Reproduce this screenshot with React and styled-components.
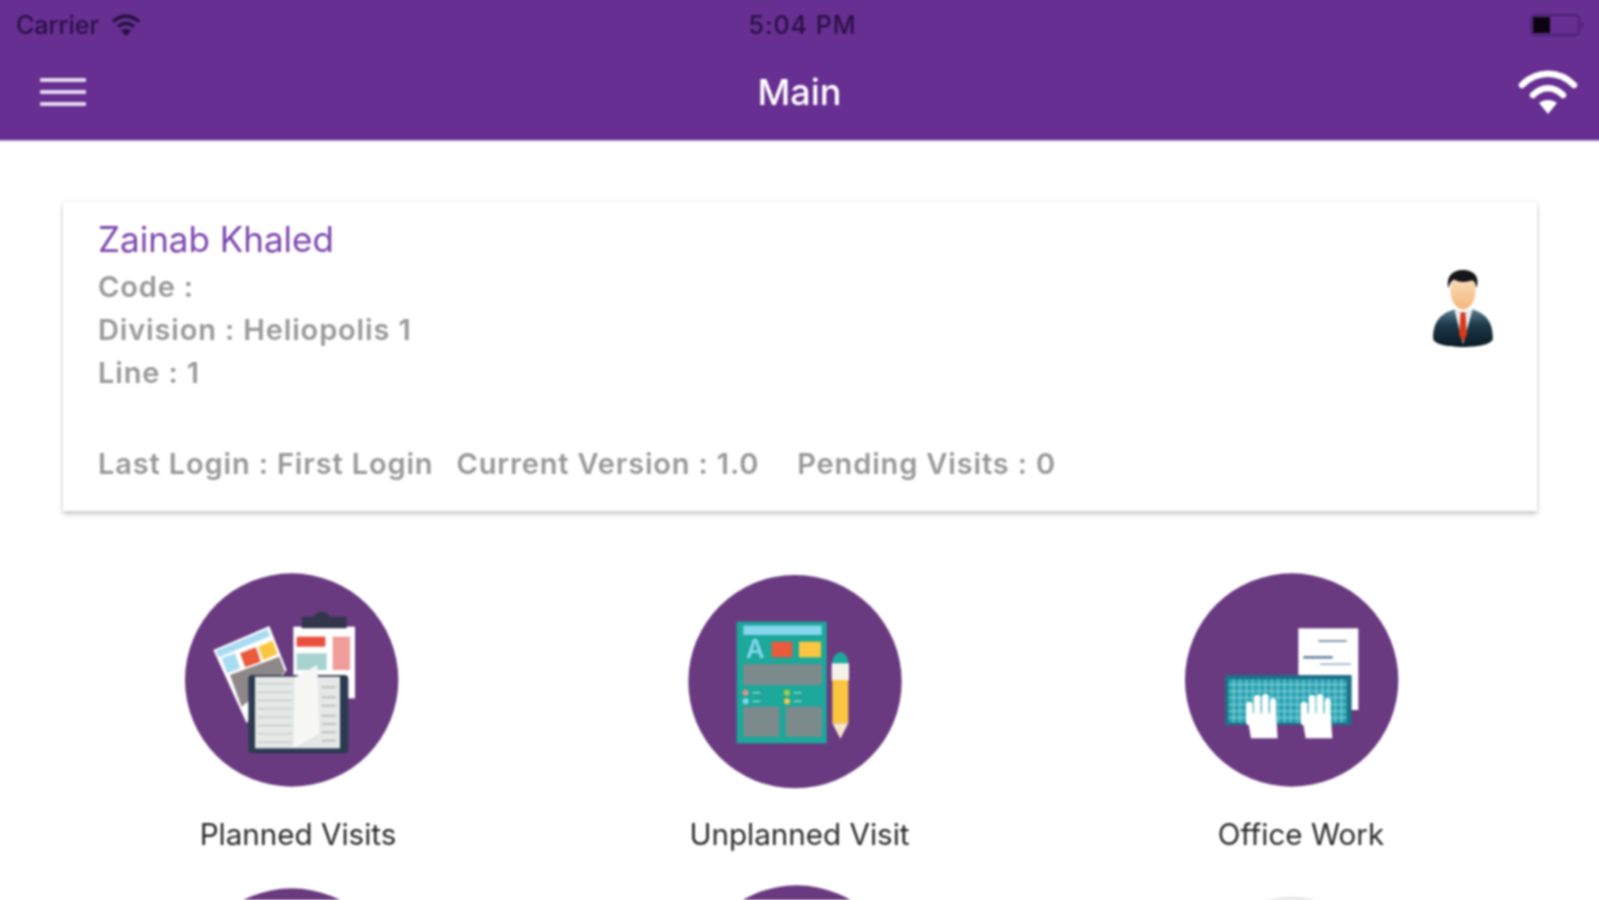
import React from "react";
import styled, { createGlobalStyle } from "styled-components";

const GlobalStyle = createGlobalStyle`
  html, body {
    margin: 0;
    padding: 0;
    overflow: hidden;
    background: #fff;
    font-family: Inter, "Noto Sans", "Liberation Sans", sans-serif;
  }
`;

// the extra 4px around the screen keeps the blur from fading at the window edge
const Screen = styled.div`
  height: 904px;
  box-sizing: border-box;
  margin: -4px -4px 0;
  padding: 4px 4px 0;
  overflow: hidden;
  background: #fff;
  filter: blur(0.9px);
`;

const Header = styled.header`
  background: #662f91;
  height: 144px;
  margin: -4px -4px 0;
  padding: 4px 4px 0;
  border-bottom: 1px solid #5d2589;
  box-sizing: border-box;
  box-shadow: 0 1px 2px rgba(102, 47, 145, 0.4);
`;

const StatusBar = styled.div`
  height: 50px;
  display: grid;
  grid-template-columns: 1fr auto 1fr;
  align-items: center;
  padding: 0 14px 0 16px;
  color: #2a1045;
  font-size: 25px;
  font-weight: 500;
`;

const StatusLeft = styled.div`
  display: flex;
  align-items: center;
  gap: 12px;
`;

const Clock = styled.span`
  letter-spacing: 1px;
  margin-left: 4px;
`;

const StatusRight = styled.div`
  display: flex;
  justify-content: flex-end;
`;

const NavBar = styled.div`
  height: 84px;
  display: grid;
  grid-template-columns: 1fr auto 1fr;
  align-items: center;
  padding: 0 21px;
`;

const MenuButton = styled.div`
  display: flex;
  flex-direction: column;
  gap: 8px;
  width: 46px;
  margin-left: 19px;
`;

const MenuLine = styled.span`
  display: block;
  height: 4px;
  border-radius: 1px;
  background: #e6d5ef;
`;

const Title = styled.div`
  color: #fff;
  font-size: 36px;
  font-weight: 500;
`;

const NavRight = styled.div`
  display: flex;
  justify-content: flex-end;
`;

const Card = styled.section`
  margin: 62px 62px 0 63px;
  height: 309px;
  box-sizing: border-box;
  padding: 12px 42px 0 35px;
  background: #fff;
  box-shadow: 0 3px 5px rgba(0, 0, 0, 0.22), 0 0 3px rgba(0, 0, 0, 0.07);
  display: flex;
  justify-content: space-between;
`;

const Name = styled.div`
  color: #7b45ad;
  font-size: 35px;
  line-height: 51px;
`;

const Detail = styled.div`
  color: #999;
  font-size: 29px;
  font-weight: 600;
  line-height: 43px;
  letter-spacing: 0.85px;
`;

const Footer = styled.div`
  display: flex;
  margin-top: 48px;
`;

const FooterItem = styled(Detail)`
  margin-right: ${(p) => p.$gap}px;
`;

const Avatar = styled.svg`
  width: 64px;
  height: 79px;
  margin-top: 55px;
`;

const TileGrid = styled.div`
  display: grid;
  grid-template-columns: repeat(3, 501.5px);
  justify-content: center;
  row-gap: 21px;
  margin-top: 49px;
`;

const Tile = styled.div`
  display: flex;
  flex-direction: column;
  align-items: center;
`;

const TileArt = styled.svg`
  width: 240px;
  height: 240px;
  transform: translateX(${(p) => p.$shift}px);
`;

const TileLabel = styled.div`
  margin-top: 14px;
  color: #2a2a2a;
  font-size: 29.6px;
  line-height: 40px;
`;

const StatusWifi = () => (
  <svg width="30" height="24" viewBox="0 0 30 24" fill="none" stroke="#26103c" strokeWidth="3.4">
    <path d="M2 8.5C10 1.5 20 1.5 28 8.5" />
    <path d="M7 13.5C12 9.5 18 9.5 23 13.5" />
    <path d="M15 23L10 17.5C13 15.5 17 15.5 20 17.5Z" fill="#26103c" stroke="none" />
  </svg>
);

const Battery = () => (
  <svg width="56" height="24" viewBox="0 0 56 24">
    <rect x="2" y="2" width="48" height="20" rx="4" fill="none" stroke="#4d2172" strokeWidth="2" />
    <path d="M52 8.500L55 12L52 15.500Z" fill="#4d2172" />
    <rect x="4" y="4" width="17" height="16" fill="#0b0410" />
  </svg>
);

const NavWifi = () => (
  <svg width="60" height="50" viewBox="0 0 60 50" fill="none" stroke="#fff" strokeLinecap="round" strokeWidth="6.5">
    <path d="M4 18C19 3 41 3 56 18" />
    <path d="M15 28C24 19 36 19 45 28" />
    <path d="M30 47L21 36C26 32 34 32 39 36Z" fill="#fff" stroke="none" />
  </svg>
);

const PersonIcon = () => (
  <Avatar viewBox="0 0 66 82">
    <defs>
      <linearGradient id="suit" x1="0" y1="0" x2="0" y2="1">
        <stop offset="0" stopColor="#5d7f90" />
        <stop offset="0.4" stopColor="#1d3a4a" />
        <stop offset="1" stopColor="#0a1a24" />
      </linearGradient>
      <linearGradient id="skin" x1="0" y1="0" x2="0" y2="1">
        <stop offset="0" stopColor="#fde6c8" />
        <stop offset="1" stopColor="#f3b67c" />
      </linearGradient>
    </defs>
    <path d="M2 72C2 54 10 46 24 42L33 46L43 42C56 46 64 54 64 72C64 78 50 81 33 81C16 81 2 78 2 72Z" fill="url(#suit)" />
    <path d="M24 42L33 78L43 42L33 46Z" fill="#e9eef0" />
    <path d="M30.500 45H35.500L37 68L33 76L29 68Z" fill="#d9381a" />
    <ellipse cx="33" cy="22" rx="13" ry="20" fill="url(#skin)" />
    <path d="M18 20C15 8 22 1 33 1C44 1 51 8 47 20C46 14 44 11 42 12C36 14 28 14 24 11C21 12 19 15 18 20Z" fill="#15151a" />
  </Avatar>
);

const Sheet = ({ children, size }) => (
  <g>
    <circle cx={size.cx} cy={size.cy} r="320" fill="#6a3a80" />
    {children}
  </g>
);

const PlannedArt = () => (
  <Sheet size={{ cx: 365, cy: 360 }}>
    <path d="M130 270L298 198L350 330L230 490Z" fill="#fff" />
    <path d="M138 272L292 208L300 228L146 292Z" fill="#a8dcf2" />
    <path d="M155 295L195 280L210 325L172 340Z" fill="#a8dcf2" />
    <path d="M210 280L258 262L272 305L226 322Z" fill="#ea5a3c" />
    <path d="M265 260L308 242L322 282L280 300Z" fill="#fbc63f" />
    <path d="M180 345L328 290L345 335L240 420L215 440Z" fill="#8d8788" />
    <rect x="370" y="200" width="185" height="215" fill="#fff" />
    <path d="M395 170H430C440 150 470 150 480 170H530V205H395Z" fill="#33364a" />
    <rect x="380" y="230" width="86" height="30" fill="#e84f3d" />
    <rect x="380" y="280" width="90" height="50" fill="#a7d3cf" />
    <rect x="488" y="230" width="52" height="100" fill="#ef9d98" />
    <rect x="235" y="345" width="300" height="235" rx="12" fill="#2c3a50" />
    <rect x="255" y="350" width="255" height="215" fill="#e4e8e6" />
    {[370, 395, 420, 445, 470, 495, 520, 545].map((y) => (
      <rect key={y} x="262" y={y} width="105" height="3" fill="#bcc4c2" />
    ))}
    {[380, 410, 435, 465, 490, 515, 540].map((y) => (
      <rect key={y} x="455" y={y} width="42" height="4" fill="#a9b1af" />
    ))}
    <path d="M375 352L442 315L448 520L370 565Z" fill="#f7f7f6" />
  </Sheet>
);

const UnplannedArt = () => (
  <Sheet size={{ cx: 360, cy: 365 }}>
    <rect x="185" y="185" width="270" height="365" fill="#1ca89a" />
    <rect x="205" y="197" width="235" height="28" fill="#86d7ee" />
    <text x="213" y="295" fontFamily="Inter, sans-serif" fontSize="76" fontWeight="600" fill="#86d7ee">A</text>
    <rect x="290" y="245" width="62" height="47" fill="#ea5a3c" />
    <rect x="372" y="245" width="66" height="47" fill="#fbc63f" />
    <rect x="205" y="312" width="235" height="63" fill="#7d8a8c" />
    <circle cx="212" cy="398" r="9" fill="#e8928a" />
    <circle cx="212" cy="424" r="9" fill="#86d7ee" />
    <circle cx="336" cy="398" r="9" fill="#a9cf3f" />
    <circle cx="336" cy="424" r="9" fill="#fbc63f" />
    {[398, 424].map((y) => (
      <g key={y}>
        <rect x="232" y={y - 2} width="24" height="4" fill="#a5dcd6" />
        <rect x="356" y={y - 2} width="24" height="4" fill="#a5dcd6" />
      </g>
    ))}
    <rect x="205" y="440" width="108" height="90" fill="#7d8a8c" />
    <rect x="332" y="440" width="108" height="90" fill="#7d8a8c" />
    <path d="M472 312C472 265 520 265 520 312Z" fill="#1ca89a" />
    <rect x="470" y="310" width="52" height="52" fill="#f4f1ea" />
    <rect x="472" y="360" width="48" height="130" fill="#fbc63f" />
    <path d="M472 490H520L496 536Z" fill="#f4e6c8" />
  </Sheet>
);

const Hand = ({ x }) => (
  <g fill="#fff">
    <rect x={x} y="425" width="20" height="70" rx="10" />
    <rect x={x + 24} y="405" width="20" height="80" rx="10" />
    <rect x={x + 48} y="402" width="20" height="80" rx="10" />
    <rect x={x + 72} y="415" width="18" height="70" rx="9" />
    <path d={`M${x + 2} 460H${x + 90}L${x + 95} 535H${x + 15}Z`} />
  </g>
);

const OfficeArt = () => (
  <Sheet size={{ cx: 365, cy: 360 }}>
    <rect x="385" y="205" width="180" height="245" fill="#fff" />
    <rect x="445" y="240" width="85" height="6" fill="#7f97ad" />
    <rect x="400" y="288" width="88" height="8" fill="#6c88a3" />
    <rect x="450" y="310" width="92" height="5" fill="#9fb2c4" />
    <rect x="165" y="345" width="380" height="150" fill="#1e6f86" />
    <rect x="175" y="358" width="355" height="130" fill="#2aa3b3" />
    {[372, 392, 412, 432, 452, 472].map((y) => (
      <rect key={y} x="175" y={y} width="355" height="2.500" fill="#a7dde2" />
    ))}
    {Array.from({ length: 18 }, (_, i) => (
      <rect key={i} x={190 + i * 19} y="358" width="2.500" height="130" fill="#a7dde2" />
    ))}
    <Hand x={228} />
    <Hand x={392} />
  </Sheet>
);

const PlainCircle = ({ cy, color }) => <circle cx="365" cy={cy} r="320" fill={color} />;

const tiles = [
  { label: "Planned Visits", shift: -8, art: <PlannedArt /> },
  { label: "Unplanned Visit", shift: -5, art: <UnplannedArt /> },
  { label: "Office Work", shift: -11, art: <OfficeArt /> },
  { shift: -8, art: <PlainCircle cy={360} color="#6a3a80" /> },
  { shift: -5, art: <PlainCircle cy={351} color="#6a3a80" /> },
  { shift: -11, art: <PlainCircle cy={386} color="#e4e4e4" /> },
];

export default function App() {
  return (
    <>
      <GlobalStyle />
      <Screen>
        <Header>
          <StatusBar>
            <StatusLeft>
              <span>Carrier</span>
              <StatusWifi />
            </StatusLeft>
            <Clock>5:04 PM</Clock>
            <StatusRight>
              <Battery />
            </StatusRight>
          </StatusBar>
          <NavBar>
            <MenuButton>
              <MenuLine />
              <MenuLine />
              <MenuLine />
            </MenuButton>
            <Title>Main</Title>
            <NavRight>
              <NavWifi />
            </NavRight>
          </NavBar>
        </Header>
        <Card>
          <div>
            <Name>Zainab Khaled</Name>
            <Detail>Code :</Detail>
            <Detail>Division : Heliopolis 1</Detail>
            <Detail>Line : 1</Detail>
            <Footer>
              <FooterItem $gap={23}>Last Login : First Login</FooterItem>
              <FooterItem $gap={38}>Current Version : 1.0</FooterItem>
              <FooterItem $gap={0}>Pending Visits : 0</FooterItem>
            </Footer>
          </div>
          <PersonIcon />
        </Card>
        <TileGrid>
          {tiles.map((tile, i) => (
            <Tile key={i}>
              <TileArt viewBox="0 0 720 720" $shift={tile.shift}>
                {tile.art}
              </TileArt>
              {tile.label && <TileLabel>{tile.label}</TileLabel>}
            </Tile>
          ))}
        </TileGrid>
      </Screen>
    </>
  );
}
